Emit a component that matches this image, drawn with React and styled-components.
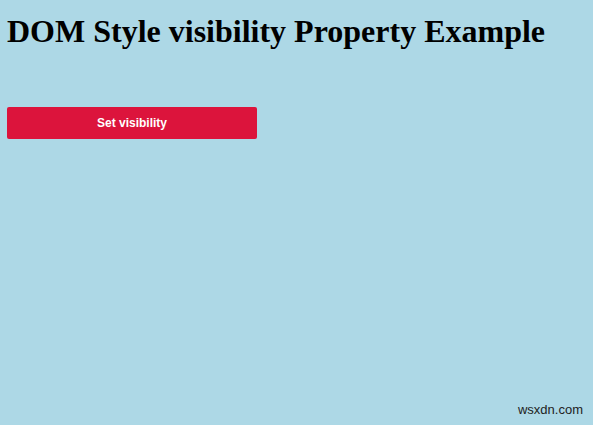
import React from "react";
import styled, { createGlobalStyle } from "styled-components";

const Global = createGlobalStyle`
  html, body { margin: 0; padding: 0; }
  body { background: #add8e6; }
  #root { min-height: 425px; }
`;

const Page = styled.div`
  position: relative;
  min-height: 425px;
  padding: 0 7px;
  box-sizing: border-box;
  display: flex;
  flex-direction: column;
  align-items: flex-start;
`;

const Title = styled.h1`
  font-family: "Liberation Serif", "Times New Roman", serif;
  font-weight: bold;
  font-size: 32px;
  line-height: 37px;
  color: #000;
  margin: 13px 0 0 0;
  white-space: nowrap;
`;

const Button = styled.button`
  margin-top: 57px;
  width: 250px;
  height: 32px;
  background: #dc143c;
  color: #fff;
  border: none;
  border-radius: 2px;
  font-family: "Liberation Sans", Arial, sans-serif;
  font-weight: bold;
  font-size: 12px;
  cursor: pointer;
`;

const Watermark = styled.div`
  position: absolute;
  right: 10px;
  bottom: 8px;
  font-family: "Liberation Sans", Arial, sans-serif;
  font-size: 13px;
  color: #222;
`;

export default function App() {
  return (
    <>
      <Global />
      <Page>
        <Title>DOM Style visibility Property Example</Title>
        <Button>Set visibility</Button>
        <Watermark>wsxdn.com</Watermark>
      </Page>
    </>
  );
}
